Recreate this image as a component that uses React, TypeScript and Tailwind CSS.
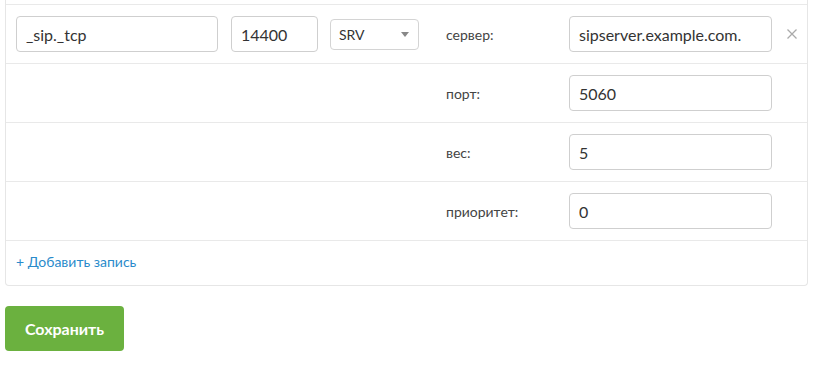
import * as React from "react";

type Field = {
  label: string;
  value: string;
};

const fields: Field[] = [
  { label: "сервер:", value: "sipserver.example.com." },
  { label: "порт:", value: "5060" },
  { label: "вес:", value: "5" },
  { label: "приоритет:", value: "0" },
];

const inputClass =
  "h-[36px] rounded-[4px] border border-[#cfcfcf] bg-white px-[9px] text-[16px] text-[#333] outline-none";

const App = () => {
  return (
    <div
      className="w-[815px] h-[366px] bg-white"
      style={{ fontFamily: "Lato, 'Open Sans', sans-serif" }}
    >
      <div className="ml-[5px] w-[803px] border-x border-b border-[#e6e6e6] rounded-b-[4px] pt-[4px]">
        {fields.map((field, i) => (
          <div
            key={field.label}
            className="flex items-center h-[59px] border-t border-[#e9e9e9]"
          >
            <div className="flex items-center w-[440px] pl-[10px]">
              {i === 0 && (
                <>
                  <input
                    className={`${inputClass} w-[202px]`}
                    defaultValue="_sip._tcp"
                  />
                  <input
                    className={`${inputClass} w-[87px] ml-[13px]`}
                    defaultValue="14400"
                  />
                  <div className="ml-[12px] flex items-center justify-between w-[89px] h-[31px] rounded-[4px] border border-[#d4d4d4] pl-[8px] pr-[9px] text-[14px] text-[#333]">
                    <span>SRV</span>
                    <svg width="8" height="5" viewBox="0 0 8 5" className="mt-[1px]">
                      <path d="M0 0h8L4 5z" fill="#888" />
                    </svg>
                  </div>
                </>
              )}
            </div>
            <div className="w-[123px] text-[14px] text-[#444]">
              {field.label}
            </div>
            <input
              className={`${inputClass} w-[203px]`}
              defaultValue={field.value}
            />
            {i === 0 && (
              <svg
                width="10"
                height="10"
                viewBox="0 0 10 10"
                className="ml-[15px]"
              >
                <path
                  d="M0.5 0.5l9 9M9.5 0.5l-9 9"
                  stroke="#aaa"
                  strokeWidth="1.3"
                />
              </svg>
            )}
          </div>
        ))}
        <div className="flex items-center h-[45px] border-t border-[#e9e9e9] pl-[10px] pb-[3px]">
          <a className="text-[14px] text-[#2a8bcb] cursor-pointer">
            + Добавить запись
          </a>
        </div>
      </div>
      <button className="mt-[20px] ml-[5px] w-[119px] h-[45px] rounded-[4px] bg-[#6bb13f] text-white text-[16px] font-bold">
        Сохранить
      </button>
    </div>
  );
};

export default App;
